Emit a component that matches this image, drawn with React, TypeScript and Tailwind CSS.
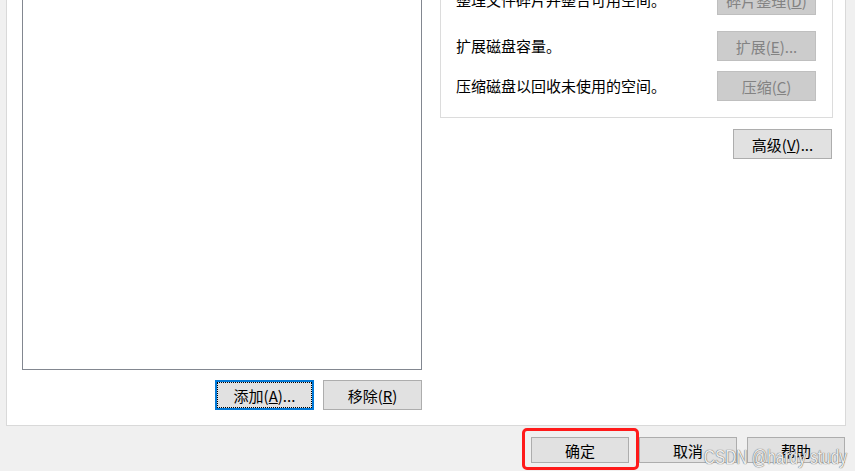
import type { ReactNode } from "react";

type BtnKind = "normal" | "disabled" | "focused";

function WinButton({
  kind = "normal",
  className = "",
  children,
}: {
  kind?: BtnKind;
  className?: string;
  children: ReactNode;
}) {
  const look =
    kind === "disabled"
      ? "border border-[#bfbfbf] bg-[#cccccc] text-[#838383]"
      : kind === "focused"
        ? "border-2 border-[#0078d7] bg-[#e1e1e1] text-black outline-1 outline-dotted outline-black outline-offset-[-3px]"
        : "border border-[#adadad] bg-[#e1e1e1] text-black";
  return (
    <div
      className={`flex shrink-0 items-center justify-center text-[15px] leading-none ${look} ${className}`}
    >
      {children}
    </div>
  );
}

const rows: { text: string; label: ReactNode }[] = [
  {
    text: "整理文件碎片并整合可用空间。",
    label: (
      <>
        碎片整理(<u>D</u>)
      </>
    ),
  },
  {
    text: "扩展磁盘容量。",
    label: (
      <>
        扩展(<u>E</u>)...
      </>
    ),
  },
  {
    text: "压缩磁盘以回收未使用的空间。",
    label: (
      <>
        压缩(<u>C</u>)
      </>
    ),
  },
];

export default function App() {
  return (
    <div
      className="relative h-[471px] w-[855px] overflow-hidden bg-[#f0f0f0]"
      style={{ fontFamily: '"Noto Sans CJK SC", "Microsoft YaHei", sans-serif' }}
    >
      {/* Tab page, top edge scrolled out of view */}
      <div className="-mt-[60px] ml-[6px] flex h-[486px] w-[840px] border border-[#d9d9d9] bg-white pl-[15px] pr-[12px] pt-[10px] pb-[15px]">
        {/* Left column: list + add/remove */}
        <div className="flex w-[400px] flex-col">
          <div className="flex-1 border border-[#828790] bg-white" />
          <div className="mt-[10px] flex h-[30px] justify-end gap-[9px]">
            <WinButton kind="focused" className="h-[30px] w-[99px]">
              添加(<u>A</u>)...
            </WinButton>
            <WinButton className="h-[30px] w-[99px]">
              移除(<u>R</u>)
            </WinButton>
          </div>
        </div>

        {/* Right column: volume actions */}
        <div className="ml-[18px] flex w-[393px] flex-col">
          <div className="flex h-[167px] flex-col border border-[#dcdcdc] pl-[15px] pr-[16px] pt-[33px]">
            {rows.map((r, i) => (
              <div
                key={i}
                className={`flex h-[30px] items-center justify-between ${i === 1 ? "mt-[16px]" : i === 2 ? "mt-[10px]" : ""}`}
              >
                <span className="text-[15px] text-black">{r.text}</span>
                <WinButton kind="disabled" className="h-[30px] w-[99px]">
                  {r.label}
                </WinButton>
              </div>
            ))}
          </div>
          <WinButton className="mr-[1px] mt-[11px] h-[30px] w-[99px] self-end">
            高级(<u>V</u>)...
          </WinButton>
        </div>
      </div>

      {/* Dialog buttons */}
      <div className="mt-[11px] flex justify-end gap-[10px] pr-[10px]">
        <div className="relative">
          <WinButton className="h-[26px] w-[98px]">确定</WinButton>
          <div className="pointer-events-none absolute -bottom-[7px] -left-[9px] -right-[10px] -top-[9px] rounded-[5px] border-[3px] border-[#ff1a1a]" />
        </div>
        <WinButton className="h-[26px] w-[98px]">取消</WinButton>
        <WinButton className="h-[26px] w-[98px]">帮助</WinButton>
      </div>

      {/* Watermark */}
      <div
        className="absolute bottom-[4px] right-[8px] origin-right scale-x-[0.77] whitespace-nowrap text-[20px] leading-none text-[#ededed] [text-shadow:0_0_1px_#666,0_0_1px_#666]"
        style={{ fontFamily: '"Liberation Sans", Arial, sans-serif' }}
      >
        CSDN @hardy study
      </div>
    </div>
  );
}
